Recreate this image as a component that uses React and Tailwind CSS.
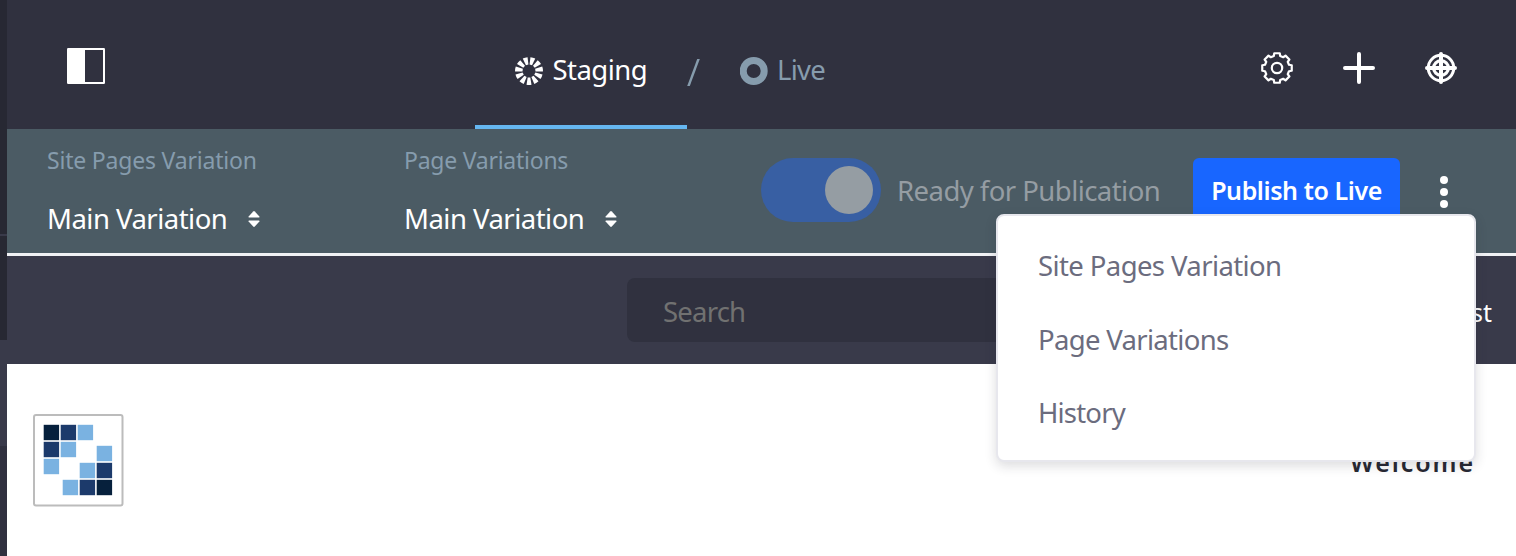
import React from 'react';

const gearPath = (() => {
  const pts = [];
  for (let i = 0; i < 8; i++) {
    const base = i * 45 - 90;
    [[-15, 12.4], [-10.5, 15], [10.5, 15], [15, 12.4]].forEach(([d, r]) => {
      const a = ((base + d) * Math.PI) / 180;
      pts.push(`${(16 + r * Math.cos(a)).toFixed(2)} ${(16 + r * Math.sin(a)).toFixed(2)}`);
    });
  }
  return `M${pts.join('L')}Z`;
})();

function PanelIcon() {
  return (
    <svg className="block h-9 w-[38px]" viewBox="0 0 38 36">
      <rect width="38" height="36" rx="1.2" fill="#fff" />
      <rect x="18" y="2" width="18" height="32" fill="#30313f" />
    </svg>
  );
}

function StagingIcon() {
  return (
    <svg className="block size-7 shrink-0" viewBox="0 0 28 28" fill="#fff">
      {Array.from({ length: 11 }, (_, i) => (
        <path key={i} d="M12.7 20.4 L15.3 20.4 L16.5 27.7 Q14 28.3 11.5 27.7 Z" transform={`rotate(${(i * 360) / 11} 14 14)`} />
      ))}
    </svg>
  );
}

function LiveIcon() {
  return (
    <svg className="block size-7 shrink-0" viewBox="0 0 28 28">
      <circle cx="13.7" cy="14" r="10.5" fill="none" stroke="#869cad" strokeWidth="7" />
    </svg>
  );
}

function GearIcon() {
  return (
    <svg className="block size-8" viewBox="0 0 32 32" fill="none" stroke="#fff" strokeWidth="2.2" strokeLinejoin="round">
      <path d={gearPath} />
      <circle cx="16" cy="16" r="5.2" />
    </svg>
  );
}

function PlusIcon() {
  return (
    <svg className="block size-8" viewBox="0 0 32 32" stroke="#fff" strokeWidth="4" strokeLinecap="round">
      <path d="M16 2V30M2 16H30" />
    </svg>
  );
}

function TargetIcon() {
  return (
    <svg className="block size-8" viewBox="0 0 32 32" fill="none" stroke="#fff">
      <circle cx="16" cy="16" r="12.7" strokeWidth="3" />
      <circle cx="16" cy="16" r="7.4" strokeWidth="3.2" />
      <path d="M16 2V30M2 16H30" strokeWidth="4" strokeLinecap="round" />
    </svg>
  );
}

function SortIcon() {
  return (
    <svg className="block h-4 w-3" viewBox="0 0 12 16" fill="#fff">
      <path d="M5.2.5Q6-.3 6.8.5L11.4 5.4Q11.9 6.5 11 6.5H1Q.1 6.5.6 5.4Z" />
      <path d="M5.2 15.5Q6 16.3 6.8 15.5L11.4 10.6Q11.9 9.5 11 9.5H1Q.1 9.5.6 10.6Z" />
    </svg>
  );
}

function Picker({ label, labelClass }) {
  return (
    <div className="flex flex-col pt-4">
      <span className={`self-start text-[23px] leading-[30px] text-[#869cad] ${labelClass}`}>{label}</span>
      <div className="mt-6 flex items-center">
        <span className="w-[200.5px] text-[27.5px] leading-10 tracking-[-0.52px] text-white">Main Variation</span>
        <SortIcon />
      </div>
    </div>
  );
}

const logoCells = [
  [11, 11, '#06203c'], [28, 11, '#1c3a6b'], [45, 11, '#7ab2e1'],
  [11, 28, '#1c3a6b'], [28, 28, '#7ab2e1'], [64, 32, '#7ab2e1'],
  [11, 45, '#7ab2e1'], [47, 49, '#7ab2e1'], [64, 49, '#1c3a6b'],
  [30, 66, '#7ab2e1'], [47, 66, '#1c3a6b'], [64, 66, '#06203c'],
];

function Logo() {
  return (
    <svg className="block h-[93px] w-[91px]" viewBox="0 0 91 93">
      <rect x="1" y="1" width="88.5" height="90.5" rx="2" fill="#fff" stroke="#bcbcbc" strokeWidth="2" />
      {logoCells.map(([x, y, fill]) => (
        <rect key={`${x}-${y}`} x={x - 0.3} y={y - 0.2} width="15.4" height="15.4" fill={fill} />
      ))}
    </svg>
  );
}

function Header() {
  return (
    <header className="flex h-[129px] bg-[#30313f]">
      <div className="w-[468px] pt-12 pl-[60px]">
        <PanelIcon />
      </div>
      <nav className="flex w-[786px] text-[27.5px] leading-10">
        <div className="flex w-[212px] items-start border-b-4 border-[#65b6f0] pt-[50px] pl-10">
          <div className="pt-[7px]"><StagingIcon /></div>
          <span className="pl-[9.5px] tracking-[-0.55px] text-white">Staging</span>
        </div>
        <svg className="mt-[58px] h-8 w-[53px]" viewBox="0 0 53 32">
          <path d="M.2 28L10.2 1H12.8L2.8 28Z" fill="#869cad" />
        </svg>
        <div className="flex items-start pt-[50px]">
          <div className="pt-[7px]"><LiveIcon /></div>
          <span className="pl-[9px] tracking-[-0.7px] text-[#869cad]">Live</span>
        </div>
      </nav>
      <div className="flex gap-[50px] pt-[52px]">
        <GearIcon />
        <PlusIcon />
        <TargetIcon />
      </div>
    </header>
  );
}

function StagingBar() {
  return (
    <section className="flex h-[127px] border-b-[3px] border-[#f1f2f5] bg-[#4b5b64]">
      <div className="w-[397px] pl-10">
        <Picker label="Site Pages Variation" labelClass="tracking-[-0.2px]" />
      </div>
      <div className="w-[357px]">
        <Picker label="Page Variations" labelClass="tracking-[-0.25px]" />
      </div>
      <div className="mt-[29px] flex h-16 w-[120px] items-center justify-end rounded-full bg-[#385fa3] pr-2">
        <div className="size-12 rounded-full bg-[#959da3]" />
      </div>
      <span className="mt-[42px] w-[312px] pl-4 text-[27.5px] leading-10 tracking-[-0.55px] whitespace-nowrap text-[#959da3]">
        Ready for Publication
      </span>
      <button className="mt-[29px] h-16 w-[207px] rounded-md bg-[#1866ff] text-[25px] leading-10 font-semibold tracking-[-0.42px] whitespace-nowrap text-white">
        Publish to Live
      </button>
      <div className="mt-[47px] ml-10 flex w-2 flex-col gap-1">
        <i className="size-2 rounded-full bg-white" />
        <i className="size-2 rounded-full bg-white" />
        <i className="size-2 rounded-full bg-white" />
      </div>
    </section>
  );
}

function Menu() {
  return (
    <div className="absolute top-[214px] left-[996px] h-[248px] w-[480px] rounded-lg border-2 border-[#e7e7ed] bg-white pt-[30px] pl-10 text-[27.5px] leading-10 text-[#6b6c7e] shadow-[0_4px_12px_rgba(39,40,51,0.16)]">
      <div className="flex flex-col gap-[33.5px] whitespace-nowrap">
        <span className="tracking-[-0.6px]">Site Pages Variation</span>
        <span className="tracking-[-0.68px]">Page Variations</span>
        <span className="tracking-[-0.8px]">History</span>
      </div>
    </div>
  );
}

export default function App() {
  return (
    <div className="relative flex h-[556px] w-[1516px] overflow-hidden bg-white font-['Noto_Sans','Open_Sans',sans-serif]">
      <aside className="flex w-[7px] shrink-0 flex-col">
        <div className="h-[234px] bg-[#272833]" />
        <div className="h-[2px] bg-[#393a4a]" />
        <div className="h-[104px] bg-[#272833]" />
        <div className="h-[106px] bg-[#393a4a]" />
        <div className="grow bg-[#30313f]" />
      </aside>
      <main className="flex w-[1509px] flex-col">
        <Header />
        <StagingBar />
        <section className="flex h-[108px] justify-between bg-[#393a4a] pt-[22px] pr-6 pl-[620px]">
          <div className="h-16 w-[520px] rounded-lg bg-[#30313f] pt-[14px] pl-9 text-[27.5px] leading-10 tracking-[-0.8px] text-[#717171]">
            Search
          </div>
          <span className="pt-[14px] text-[25px] leading-10 text-white">Test</span>
        </section>
        <section className="flex justify-between pt-[50px] pr-[41px] pl-[26px]">
          <Logo />
          <span className="pt-7 text-[25px] leading-10 font-semibold tracking-[1.9px] text-[#272833]">Welcome</span>
        </section>
      </main>
      <Menu />
    </div>
  );
}
